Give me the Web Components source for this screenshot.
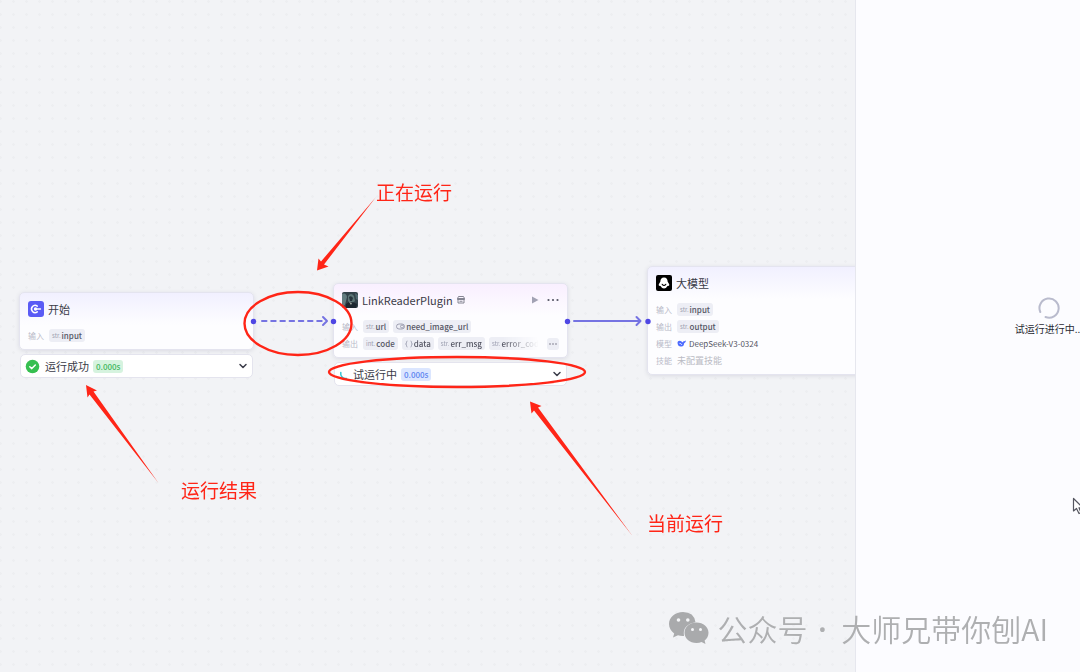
<!DOCTYPE html>
<html lang="zh-CN">
<head>
<meta charset="utf-8">
<title>工作流试运行</title>
<style>
  html, body { height: 100%; }
  body {
    margin: 0;
    overflow: hidden;
    background: #f2f3f6;
    color: #3a3b47;
    font-family: "Noto Sans CJK SC", "Noto Sans", sans-serif;
  }
</style>
</head>
<body>
<workflow-app></workflow-app>

<script>
const define = (name, html, setup) => {
  const template = document.createElement('template');
  template.innerHTML = html;
  customElements.define(name, class extends HTMLElement {
    constructor() {
      super();
      this.attachShadow({ mode: 'open' }).append(template.content.cloneNode(true));
    }
    connectedCallback() { if (setup) setup(this, this.shadowRoot); }
  });
};

/* A typed variable chip */
define('var-tag', `
  <style>
    :host { display: inline-flex; flex: none; align-items: center; gap: 1px; height: 13px; padding: 0 3px;
      border-radius: 3px; background: #edeef5; font-size: 8px; line-height: 13px; font-weight: 500; color: #555664; }
    .type { display: flex; align-items: center; font-size: 6px; line-height: 10px; height: 13px; font-weight: 400; color: #9c9eb0; }
    .type svg { display: block; }
  </style>
  <span class="type"></span><slot></slot>`,
  (el, root) => {
    const type = el.getAttribute('type');
    const box = root.querySelector('.type');
    if (type === 'bool') {
      box.innerHTML = '<svg width="9" height="7" viewBox="0 0 18 14" fill="none" stroke="#9799ab" stroke-width="1.8"><rect x="1" y="2" width="16" height="10" rx="5"/><circle cx="12" cy="7" r="3"/></svg>';
    } else if (type === 'object') {
      box.innerHTML = '<svg width="8" height="8" viewBox="0 0 16 16" fill="none" stroke="#9799ab" stroke-width="1.5"><path d="M5 2Q3 2 3 4V6Q3 8 1 8 3 8 3 10V12Q3 14 5 14M11 2Q13 2 13 4V6Q13 8 15 8 13 8 13 10V12Q13 14 11 14"/></svg>';
    } else {
      box.textContent = type + '.';
    }
  });

/* A labelled row in a node */
define('node-row', `
  <style>
    :host { display: flex; align-items: center; gap: 5px; height: 17px; font-size: 8px; line-height: 13px; }
    .label { flex: none; width: 16px; color: #b9bac8; }
    .items { display: flex; align-items: center; gap: 4px; flex: 1; min-width: 0; overflow: hidden; white-space: nowrap; }
    :host([fade]) .items { -webkit-mask-image: linear-gradient(90deg, #000 78%, transparent 98%); mask-image: linear-gradient(90deg, #000 78%, transparent 98%); }
  </style>
  <span class="label"></span><span class="items"><slot></slot></span><slot name="end"></slot>`,
  (el, root) => { root.querySelector('.label').textContent = el.getAttribute('label'); });

define('flow-node', `
  <style>
    :host { display: block; box-sizing: border-box; border: 1px solid #e4e4ef; border-radius: 5px;
      background: linear-gradient(var(--tint, #f1f0ff), #fdfdff 32px);
      box-shadow: 0 1px 4px rgba(60, 60, 100, .13); padding: 0 8px 5px; }
    header { display: flex; align-items: center; gap: 4px; height: 32px; margin-bottom: 2px; }
    h2 { margin: 0; font-size: 11px; line-height: 16px; font-weight: 400; }
    .actions { margin-left: auto; display: flex; align-items: center; gap: 8px; }
  </style>
  <header><slot name="icon"></slot><h2></h2><slot name="mark"></slot><span class="actions"><slot name="actions"></slot></span></header>
  <slot></slot>`,
  (el, root) => { root.querySelector('h2').textContent = el.getAttribute('heading'); });

define('icon-button', `
  <style>
    :host { display: inline-flex; flex: none; }
    button { display: flex; align-items: center; justify-content: center; border: 0; padding: 0; margin: 0; background: none; color: inherit; cursor: pointer; }
  </style>
  <button type="button"><slot></slot></button>`,
  (el, root) => root.querySelector('button').setAttribute('aria-label', el.getAttribute('label')));

/* Run state shown under a node */
define('run-status', `
  <style>
    :host { display: flex; align-items: center; gap: 4px; box-sizing: border-box; height: 24px; padding: 0 4px;
      border: 1px solid #e4e4ee; border-radius: 5px; background: #fff; font-size: 11px; line-height: 16px; }
    .time { padding: 0 3px; height: 13px; border-radius: 3px; font-size: 8px; line-height: 13px; font-weight: 500; background: #d6f3df; color: #3bb65c; }
    :host([running]) .time { background: #dbe6ff; color: #5a83f0; }
    icon-button { margin-left: auto; }
    svg { display: block; }
  </style>
  <slot name="icon"></slot><span><slot></slot></span><span class="time">0.000s</span>
  <icon-button label="展开运行结果"><svg width="10" height="10" viewBox="0 0 10 10" fill="none" stroke="#3c3d4a" stroke-width="1.5" stroke-linecap="round" stroke-linejoin="round"><path d="M2 3.5 5 6.5 8 3.5"/></svg></icon-button>`);

/* Connections and their ports */
define('flow-edges', `
  <style>
    :host { position: absolute; inset: 0; pointer-events: none; }
    svg { display: block; width: 100%; height: 100%; overflow: hidden; }
  </style>
  <svg fill="none" stroke="#7573e2" stroke-width="2" stroke-linecap="round" stroke-linejoin="round">
    <path d="M262 321H322" stroke-dasharray="4.5 4.7"/>
    <path d="M323 317 327 321 323 325"/>
    <path d="M574 321H640"/><path d="M636.500 317 640.500 321 636.500 325"/>
    <g fill="#4f47e4" stroke="none">
      <circle cx="253.500" cy="321.500" r="2.700"/><circle cx="333.500" cy="321.500" r="2.700"/>
      <circle cx="567.500" cy="321.500" r="2.700"/><circle cx="648" cy="321.500" r="2.700"/>
    </g>
  </svg>`);

/* Red marks drawn over the canvas */
define('canvas-notes', `
  <style>
    :host { position: absolute; inset: 0; pointer-events: none; color: #ff2517; font-size: 19px; line-height: 28px; }
    svg { display: block; width: 100%; height: 100%; overflow: hidden; }
    span { position: absolute; white-space: nowrap; }
    .a { left: 376px; top: 178px; }
    .b { left: 181px; top: 476px; }
    .c { left: 647px; top: 509px; }
  </style>
  <svg fill="none" stroke="#ff2517" stroke-width="2.400">
    <ellipse cx="298" cy="323.500" rx="53.500" ry="31.500"/>
    <ellipse cx="457" cy="372" rx="128" ry="15"/>
    <g fill="#ff2517" stroke="none">
      <path d="M317 270.500 318.500 258.500 321 261.500 376 197 324 264.500 328.500 266.500Z"/>
      <path d="M86 385 97 390.500 93.500 391.500 158.500 483 89.500 394.500 87.500 397.500Z"/>
      <path d="M530 401.500 541.500 406 538 407.500 632.500 536 534 410.500 531.500 413.500Z"/>
    </g>
  </svg>
  <span class="a">正在运行</span><span class="b">运行结果</span><span class="c">当前运行</span>`);

define('flow-canvas', `
  <style>
    :host { display: block; position: relative; overflow: hidden;
      background: #f2f3f6 radial-gradient(circle, #edeef1 1px, transparent 1.5px) -6px -5px / 13px 13px; }
    .group { position: absolute; display: grid; grid-template-columns: minmax(0, 1fr); gap: 4px; width: 235px; }
    .group run-status { margin: 0 1px; }
    .start { left: 19px; top: 292px; }
    .plugin { left: 333px; top: 283px; }
    .model { left: 647px; top: 266px; }
    .plugin flow-node { --tint: #f9efff; }
    svg { display: block; flex: none; }
    .model-name { color: #555664; }
    .model-value { display: flex; align-items: center; gap: 3px; }
    .none { color: #babbc4; font-size: 9px; }
    .chip { background: #edeef5; border-radius: 3px; padding: 0 2px; height: 12px; color: #666778; display: inline-flex; align-items: center; }
  </style>
  <section class="group start">
    <flow-node heading="开始">
      <svg slot="icon" width="16" height="16" viewBox="0 0 16 16"><rect width="16" height="16" rx="3" fill="#5a5bf5"/><path d="M9.300 5.100A3.600 3.600 0 1 0 9.300 10.900" fill="none" stroke="#fff" stroke-width="1.500" stroke-linecap="round"/><circle cx="7.500" cy="8" r="1.700" fill="#fff"/><path d="M8 8H12.500" stroke="#fff" stroke-width="1.300" stroke-linecap="round"/></svg>
      <node-row label="输入"><var-tag type="str">input</var-tag></node-row>
    </flow-node>
    <run-status>
      <svg slot="icon" width="16" height="15" viewBox="0 0 16 15"><circle cx="7.500" cy="7.500" r="6.800" fill="#36bf50"/><path d="M4.800 7.700 6.800 9.600 10.300 6" fill="none" stroke="#fff" stroke-width="1.500" stroke-linecap="round" stroke-linejoin="round"/></svg>运行成功
    </run-status>
  </section>

  <section class="group plugin">
    <flow-node heading="LinkReaderPlugin">
      <svg slot="icon" width="16" height="16" viewBox="0 0 16 16"><rect width="16" height="16" rx="2" fill="#33424a"/><path d="M0 2Q4 0 5 5L3 13 0 15Z" fill="#637c80"/><path d="M6 4Q9 0 12 4L13 9 9 12 6 9Z" fill="#5d7576"/><path d="M7 5Q9 3 11 6L10 9H8Z" fill="#27343d"/><path d="M4 12Q8 8 15 12L14 16H4Z" fill="#1d2730"/><path d="M13 1 16 3V8L14 7Z" fill="#506870"/><path d="M7 10 10 11 9 13Z" fill="#a3aaa4"/></svg>
      <svg slot="mark" width="8" height="8" viewBox="0 0 16 16" fill="none" stroke="#777887" stroke-width="1.800"><path d="M3 1H13L15 5V7H1V5ZM2 7V14H14V7M1 5H15M5 10.500H11"/></svg>
      <icon-button slot="actions" label="试运行该节点"><svg width="8" height="8" viewBox="0 0 8 8"><path d="M1 .5 7.500 4 1 7.500Z" fill="#a2a2b4"/></svg></icon-button>
      <icon-button slot="actions" label="更多"><svg width="12" height="8" viewBox="0 0 12 8" fill="#555665"><circle cx="1.500" cy="4" r="1.100"/><circle cx="6" cy="4" r="1.100"/><circle cx="10.500" cy="4" r="1.100"/></svg></icon-button>
      <node-row label="输入"><var-tag type="str">url</var-tag><var-tag type="bool">need_image_url</var-tag></node-row>
      <node-row label="输出" fade><var-tag type="int">code</var-tag><var-tag type="object">data</var-tag><var-tag type="str">err_msg</var-tag><var-tag type="str">error_code</var-tag>
        <icon-button slot="end" label="更多输出" class="chip"><svg width="8" height="8" viewBox="0 0 8 8" fill="#777887"><circle cx="1" cy="4" r=".8"/><circle cx="4" cy="4" r=".8"/><circle cx="7" cy="4" r=".8"/></svg></icon-button></node-row>
    </flow-node>
    <run-status running>
      <svg slot="icon" width="10" height="13" viewBox="1 0 10 13" fill="none" stroke="#31c3d2" stroke-width="1.500" stroke-linecap="round"><path d="M2.800 4.500A5 5 0 0 0 8.500 10.500"/></svg>试运行中
    </run-status>
  </section>

  <section class="group model">
    <flow-node heading="大模型">
      <svg slot="icon" width="16" height="16" viewBox="0 0 16 16"><rect width="16" height="16" rx="2" fill="#000"/><path d="M8 2.500C5.500 2.500 4.300 4.300 4.400 6.500L2.700 9.500Q2.300 11 4.500 11 6 13.500 8 13.500 10 13.500 11.500 11 13.700 11 13.300 9.500L11.600 6.500C11.700 4.300 10.500 2.500 8 2.500Z" fill="#fff"/><path d="M6.200 9.300Q8 11.500 9.800 9.300" fill="none" stroke="#000" stroke-width="1.100" stroke-linecap="round"/></svg>
      <node-row label="输入"><var-tag type="str">input</var-tag></node-row>
      <node-row label="输出"><var-tag type="str">output</var-tag></node-row>
      <node-row label="模型"><span class="model-value"><svg width="9" height="9" viewBox="0 0 18 18"><path d="M1 8C1 3 6 2 9 5L12 7Q12 4 14 4 17 5 18 2 18 8 14 9 14 15 9 15 2 16 1 8Z" fill="#4d6bfe"/><path d="M5 9Q8 8 10 12" fill="none" stroke="#fff" stroke-width="1.500"/></svg><span class="model-name">DeepSeek-V3-0324</span></span></node-row>
      <node-row label="技能"><span class="none">未配置技能</span></node-row>
    </flow-node>
  </section>
  <flow-edges></flow-edges>
  <canvas-notes></canvas-notes>`);

/* Test run drawer, wider than what the window shows of it */
define('run-panel', `
  <style>
    :host { display: block; overflow: hidden; box-sizing: border-box; border-left: 1px solid #e6e7ee; background: #fcfcff; }
    .body { width: 386px; height: 100%; display: grid; justify-items: center; align-content: start; gap: 2px; padding-top: 297px; box-sizing: border-box; }
    p { margin: 0; font-size: 10px; line-height: 16px; color: #292a33; }
    svg { display: block; }
  </style>
  <div class="body" role="status">
    <svg width="22" height="22" viewBox="0 0 22 22" fill="none" stroke="#b9bbcd" stroke-width="2" stroke-linecap="round"><path d="M2.300 15A9.600 9.600 0 1 1 7.500 20"/></svg>
    <p>试运行进行中...</p>
  </div>`);

define('account-mark', `
  <style>
    :host { position: absolute; right: 32px; bottom: 22px; display: flex; align-items: center; gap: 8px;
      color: #aeafb1; font-size: 30px; line-height: 44px; font-weight: 350; white-space: pre; pointer-events: none; }
    svg { display: block; }
    .dot { font-family: "Noto Sans", sans-serif; font-weight: 600; line-height: 1; padding: 0 7px 0 3px; }
  </style>
  <svg width="40" height="34" viewBox="0 0 40 34"><path d="M14 1C6.200 1 0 6.300 0 13 0 16.800 2 20.200 5.200 22.400L4 26.500 9 24.300Q11.500 25.200 15 25 13 14 26.500 11.300 25 1 14 1Z" fill="#a9aaac"/><path d="M27.500 11.500C20.700 11.500 15.500 16 15.500 21.700S20.700 32 27.500 32Q30.500 32 32.500 31L36.500 33 35.600 29.500C38 27.700 39.500 25 39.500 21.700 39.500 16 34.300 11.500 27.500 11.500Z" fill="#a9aaac"/><g fill="#f5f6f8"><circle cx="9.500" cy="9" r="1.800"/><circle cx="18.800" cy="9" r="1.800"/><circle cx="23.500" cy="18.500" r="1.500"/><circle cx="31.500" cy="18.500" r="1.500"/></g></svg>
  <span>公众号<span class="dot"> · </span>大师兄带你刨AI</span>`);

define('mouse-pointer', `
  <style>:host { position: absolute; right: 0; top: 497px; width: 8px; overflow: hidden; pointer-events: none; } svg { display: block; }</style>
  <svg width="13" height="18" viewBox="0 0 13 18"><path d="M1.500 1.500V14L4.500 11.500 7 16.500 9 15.500 7 10.800H11Z" fill="#fff" stroke="#555660" stroke-width="1.200" stroke-linejoin="round"/></svg>`);

define('workflow-app', `
  <style>
    :host { display: grid; grid-template-columns: minmax(0, 1fr) 225px; height: 100vh; position: relative; overflow: hidden; }
  </style>
  <flow-canvas></flow-canvas>
  <run-panel></run-panel>
  <account-mark></account-mark>
  <mouse-pointer></mouse-pointer>`);
</script>
</body>
</html>
